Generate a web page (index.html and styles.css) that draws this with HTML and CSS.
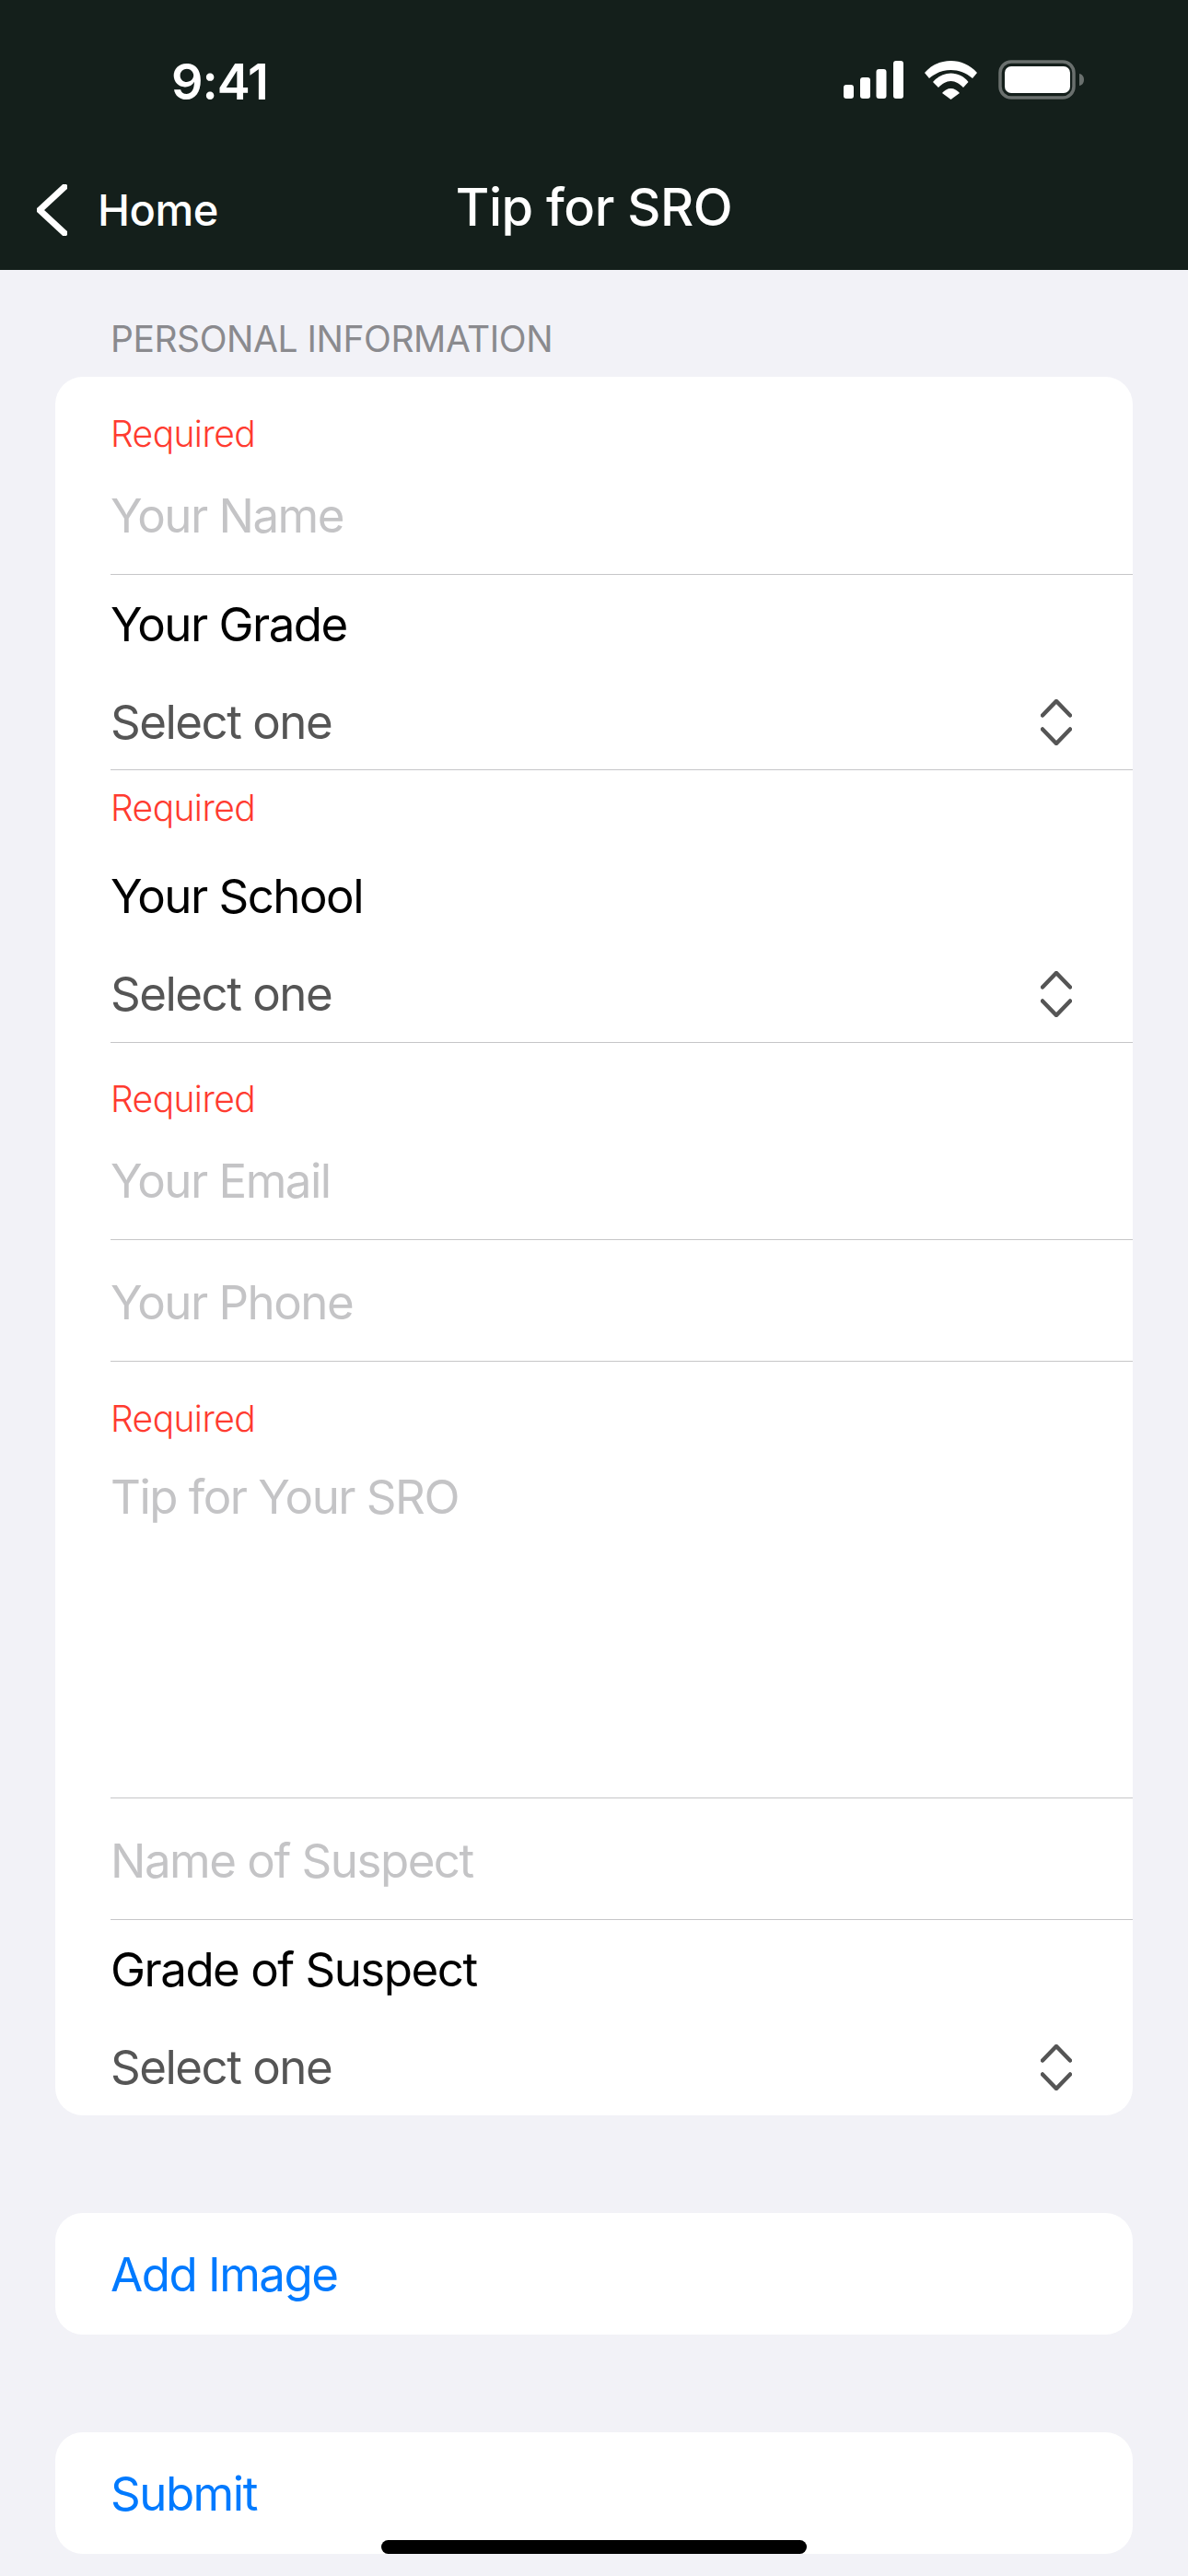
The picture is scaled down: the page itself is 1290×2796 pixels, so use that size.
FILE: index.html
```html
<!DOCTYPE html>
<html lang="en">
<head>
    <meta charset="UTF-8">
    <meta name="viewport" content="width=device-width, initial-scale=1.0">
    <title>Tip for SRO</title>
    <link rel="stylesheet" href="styles.css">
</head>
<body>
    <div id="wrapper">
        <div class="top">
            <div class="status">
                <span class="time">9:41</span>
                <div class="statusIcons">
                    <svg width="65" height="41" viewBox="0 0 65 41" fill="#fff">
                        <rect x="0" y="26" width="11" height="15" rx="3"/>
                        <rect x="18" y="18" width="11" height="23" rx="3"/>
                        <rect x="35.500" y="9" width="11" height="32" rx="3"/>
                        <rect x="54" y="0" width="11" height="41" rx="3"/>
                    </svg>
                    <svg width="57" height="42" viewBox="0 0 57 42" fill="#fff">
                        <path d="M0 13C8 4 18 0 28.500 0S49 4 57 13L52 19C45 13 37 10 28.500 10S12 13 5 19z"/>
                        <path d="M9 23C14 17 21 13.500 28.500 13.500S43 17 47.500 23L42 29C38 25 33.500 22 28.500 22S19 25 15 29z"/>
                        <path d="M19 35C21.500 32 25 30 28.500 30S35.500 32 38 35L28.500 42z"/>
                    </svg>
                    <svg width="93" height="43" viewBox="0 0 93 43">
                        <rect x="2" y="2" width="80" height="39" rx="12" fill="none" stroke="#6a706e" stroke-width="3.500"/>
                        <rect x="7" y="7" width="71" height="29" rx="7" fill="#fff"/>
                        <path d="M88 15c3 .5 5 3 5 6.500s-2 6-5 6.500z" fill="#6a706e"/>
                    </svg>
                </div>
            </div>
            <div class="navBar">
                <div class="back">
                    <svg width="33" height="56" viewBox="0 0 33 56">
                        <path d="M30 3L3 28L30 53" fill="none" stroke="#fff" stroke-width="7" stroke-linecap="round" stroke-linejoin="round"/>
                    </svg>
                    <span>Home</span>
                </div>
                <div class="navTitle">Tip for SRO</div>
            </div>
        </div>

        <div class="sectionTitle">PERSONAL INFORMATION</div>

        <div class="card formCard">
            <div class="row">
                <div class="req">Required</div>
                <div class="hint">Your Name</div>
            </div>
            <div class="row picker">
                <div class="label">Your Grade</div>
                <div class="select">
                    <span>Select one</span>
                    <svg class="updown" width="34" height="50" viewBox="0 0 34 50"><path d="M2 17.500L17 2L32 17.500M2 32.500L17 48L32 32.500"/></svg>
                </div>
            </div>
            <div class="row picker pickerReq">
                <div class="req">Required</div>
                <div class="label">Your School</div>
                <div class="select">
                    <span>Select one</span>
                    <svg class="updown" width="34" height="50" viewBox="0 0 34 50"><path d="M2 17.500L17 2L32 17.500M2 32.500L17 48L32 32.500"/></svg>
                </div>
            </div>
            <div class="row">
                <div class="req">Required</div>
                <div class="hint">Your Email</div>
            </div>
            <div class="row">
                <div class="hint">Your Phone</div>
            </div>
            <div class="row tipRow">
                <div class="req">Required</div>
                <div class="hint">Tip for Your SRO</div>
            </div>
            <div class="row">
                <div class="hint">Name of Suspect</div>
            </div>
            <div class="row picker">
                <div class="label">Grade of Suspect</div>
                <div class="select">
                    <span>Select one</span>
                    <svg class="updown" width="34" height="50" viewBox="0 0 34 50"><path d="M2 17.500L17 2L32 17.500M2 32.500L17 48L32 32.500"/></svg>
                </div>
            </div>
        </div>

        <div class="card action">Add Image</div>
        <div class="card action">Submit</div>

        <div class="homeBar"></div>
    </div>
</body>
</html>
```

FILE: styles.css
```css
body {
    margin: 0;
    background-color: #f2f2f7;
    font-family: Inter, "Liberation Sans", sans-serif;
}
#wrapper {
    position: relative;
    width: 1290px;
    height: 2796px;
    overflow: hidden;
}

/* status bar + navigation */
.top {
    height: 293px;
    background-color: #141f1b;
    color: #fff;
}
.status {
    height: 176px;
    box-sizing: border-box;
    padding: 0 113px 0 186px;
    display: flex;
    justify-content: space-between;
    align-items: center;
}
.time {
    font-size: 54px;
    font-weight: 600;
    letter-spacing: -1px;
}
.statusIcons {
    display: flex;
    align-items: center;
    gap: 23px;
    margin-bottom: 3px;
}
.navBar {
    display: grid;
    grid-template-columns: 1fr auto 1fr;
    align-items: baseline;
    padding: 15px 40px 0;
}
.back {
    display: flex;
    align-items: baseline;
    gap: 33px;
    font-size: 47px;
    font-weight: 500;
    letter-spacing: -0.5px;
}
.back svg {
    align-self: center;
}
.navTitle {
    font-size: 56px;
    font-weight: 500;
    letter-spacing: -0.5px;
}

.sectionTitle {
    height: 116px;
    box-sizing: border-box;
    padding-top: 51px;
    padding-left: 120px;
    font-size: 39px;
    line-height: 48px;
    letter-spacing: -0.45px;
    color: #8a8a8e;
}

.card {
    margin: 0 60px;
    background-color: #fff;
    border-radius: 30px;
}
.formCard {
    padding-top: 1px;
}
.action {
    height: 132px;
    box-sizing: border-box;
    margin-top: 106px;
    padding-left: 60px;
    font-size: 51px;
    line-height: 134px;
    color: #007aff;
    letter-spacing: -1.5px;
}

/* form rows */
.row {
    margin-left: 60px;
    padding: 36px 0 33px;
    border-bottom: 1px solid #c6c6c8;
    font-size: 51px;
    letter-spacing: -1.5px;
}
.row:last-child {
    border-bottom-color: transparent;
}
.req {
    height: 46px;
    margin-top: 2px;
    margin-bottom: 34px;
    font-size: 39px;
    font-weight: 350;
    line-height: 46px;
    letter-spacing: -0.6px;
    color: #ff3b30;
}
.hint, .label, .select {
    height: 62px;
    line-height: 62px;
}
.hint {
    line-height: 64px;
    color: #c4c4c6;
}
.label {
    color: #000;
    margin-bottom: 44px;
}
.select {
    display: flex;
    justify-content: space-between;
    align-items: center;
    padding-right: 66px;
    color: #555;
}
.updown path {
    fill: none;
    stroke: #555;
    stroke-width: 4.500;
    stroke-linecap: round;
    stroke-linejoin: round;
}
.picker {
    padding: 23px 0 20px;
}
.pickerReq {
    padding-bottom: 21px;
}
.pickerReq .req {
    margin-top: -5px;
    margin-bottom: 42px;
}
.tipRow {
    height: 474px;
    box-sizing: border-box;
}
.tipRow .req {
    margin-top: 3px;
    margin-bottom: 30px;
}

.homeBar {
    position: absolute;
    left: 414px;
    top: 2757px;
    width: 462px;
    height: 15px;
    border-radius: 8px;
    background-color: #000;
}
```
